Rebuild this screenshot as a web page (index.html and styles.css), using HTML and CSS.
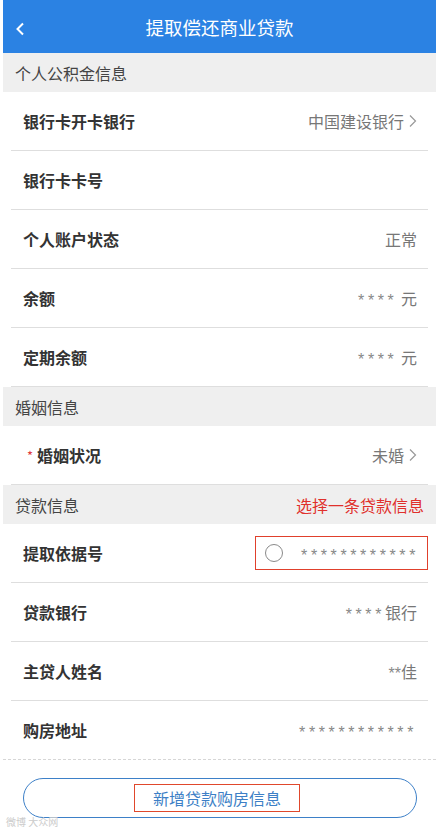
FILE: index.html
```html
<!DOCTYPE html>
<html lang="zh-CN">
<head>
    <meta charset="UTF-8">
    <meta name="viewport" content="width=device-width, initial-scale=1.0">
    <title>提取偿还商业贷款</title>
    <link rel="stylesheet" href="styles.css">
</head>
<body>
<div class="page">
    <div class="topbar">
        <svg class="back" width="10" height="14" viewBox="0 0 10 14"><path d="M8 1.5 L2.5 7 L8 12.5" fill="none" stroke="#fff" stroke-width="2"/></svg>
        <h1>提取偿还商业贷款</h1>
    </div>

    <div class="section-title"><span>个人公积金信息</span></div>
    <div class="row">
        <span class="label">银行卡开卡银行</span>
        <span class="value">中国建设银行<svg class="arrow" width="8" height="14" viewBox="0 0 8 14"><path d="M1 1.5 L6.5 7 L1 12.5" fill="none" stroke="#999" stroke-width="1.2"/></svg></span>
    </div>
    <div class="row">
        <span class="label">银行卡卡号</span>
    </div>
    <div class="row">
        <span class="label">个人账户状态</span>
        <span class="value">正常</span>
    </div>
    <div class="row">
        <span class="label">余额</span>
        <span class="value"><span class="stars">****</span>&nbsp;元</span>
    </div>
    <div class="row">
        <span class="label">定期余额</span>
        <span class="value"><span class="stars">****</span>&nbsp;元</span>
    </div>

    <div class="section-title"><span>婚姻信息</span></div>
    <div class="row">
        <span class="label"><i class="req">*</i>婚姻状况</span>
        <span class="value">未婚<svg class="arrow" width="8" height="14" viewBox="0 0 8 14"><path d="M1 1.5 L6.5 7 L1 12.5" fill="none" stroke="#999" stroke-width="1.2"/></svg></span>
    </div>

    <div class="section-title"><span>贷款信息</span><span class="hint">选择一条贷款信息</span></div>
    <div class="row">
        <span class="label">提取依据号</span>
        <span class="pick">
            <span class="radio"></span>
            <span class="stars">************</span>
        </span>
    </div>
    <div class="row">
        <span class="label">贷款银行</span>
        <span class="value"><span class="stars">****</span>银行</span>
    </div>
    <div class="row">
        <span class="label">主贷人姓名</span>
        <span class="value"><span class="stars tight">**</span>佳</span>
    </div>
    <div class="row last">
        <span class="label">购房地址</span>
        <span class="value"><span class="stars">************</span></span>
    </div>

    <div class="dashed"></div>

    <div class="btn-wrap">
        <div class="add-btn"><span class="add-text">新增贷款购房信息</span></div>
    </div>

    <div class="watermark">微博 大众网</div>
</div>
</body>
</html>
```

FILE: styles.css
```css
body {
    margin: 0;
    padding: 0;
    background-color: #fff;
    font-family: "Noto Sans CJK SC", "Noto Sans", sans-serif;
    color: #333;
}

.page {
    margin: 0 5px 0 3px;
    position: relative;
    height: 832px;
}

.topbar {
    height: 53px;
    background-color: #2b82e3;
    display: flex;
    align-items: center;
    justify-content: center;
    position: relative;
}

.topbar h1 {
    margin: 0;
    font-size: 18.5px;
    font-weight: normal;
    color: #fff;
}

.back {
    position: absolute;
    left: 12px;
    top: 22px;
}

.section-title {
    height: 39px;
    background-color: #efefef;
    display: flex;
    align-items: center;
    justify-content: space-between;
    padding: 0 12px;
    font-size: 16px;
    color: #444;
}

.hint {
    color: #e0302c;
}

.row {
    height: 58px;
    margin: 0 8px;
    padding: 0 11px 0 12px;
    border-bottom: 1px solid #dedede;
    display: flex;
    align-items: center;
    justify-content: space-between;
}

.row.last {
    border-bottom: none;
}

.label {
    font-size: 16px;
    font-weight: bold;
    color: #333;
    display: flex;
    align-items: center;
}

.req {
    font-style: normal;
    color: #e0393e;
    font-size: 13px;
    font-weight: normal;
    margin: 0 4px 0 4px;
}

.value {
    font-size: 16px;
    color: #777;
    display: flex;
    align-items: center;
}

.arrow {
    margin-left: 5px;
}

.stars {
    font-family: "Liberation Sans", sans-serif;
    font-size: 16px;
    line-height: 16px;
    letter-spacing: 3.6px;
    color: #888;
    padding-top: 6px;
}

.stars.tight {
    letter-spacing: 0;
}

.pick {
    margin-right: -11px;
    width: 173px;
    height: 34px;
    border: 1px solid #e0402c;
    display: flex;
    align-items: center;
    justify-content: space-between;
    padding: 0 8px 0 9px;
    box-sizing: border-box;
}

.radio {
    width: 16px;
    height: 16px;
    border: 1.5px solid #8a8a8a;
    border-radius: 50%;
}

.dashed {
    border-top: 1px dashed #d6d6d6;
}

.btn-wrap {
    padding: 18px 19px 0 20px;
}

.add-btn {
    height: 38px;
    border: 1.5px solid #3d80c8;
    border-radius: 20px;
    display: flex;
    align-items: center;
    justify-content: center;
}

.add-text {
    font-size: 16px;
    color: #3d7fc6;
    border: 1.5px solid #e0482c;
    padding: 1px 18px 1px 18px;
    margin-left: -6px;
}

.watermark {
    position: absolute;
    left: 3px;
    top: 814px;
    font-size: 10px;
    color: #ccc;
}
```
